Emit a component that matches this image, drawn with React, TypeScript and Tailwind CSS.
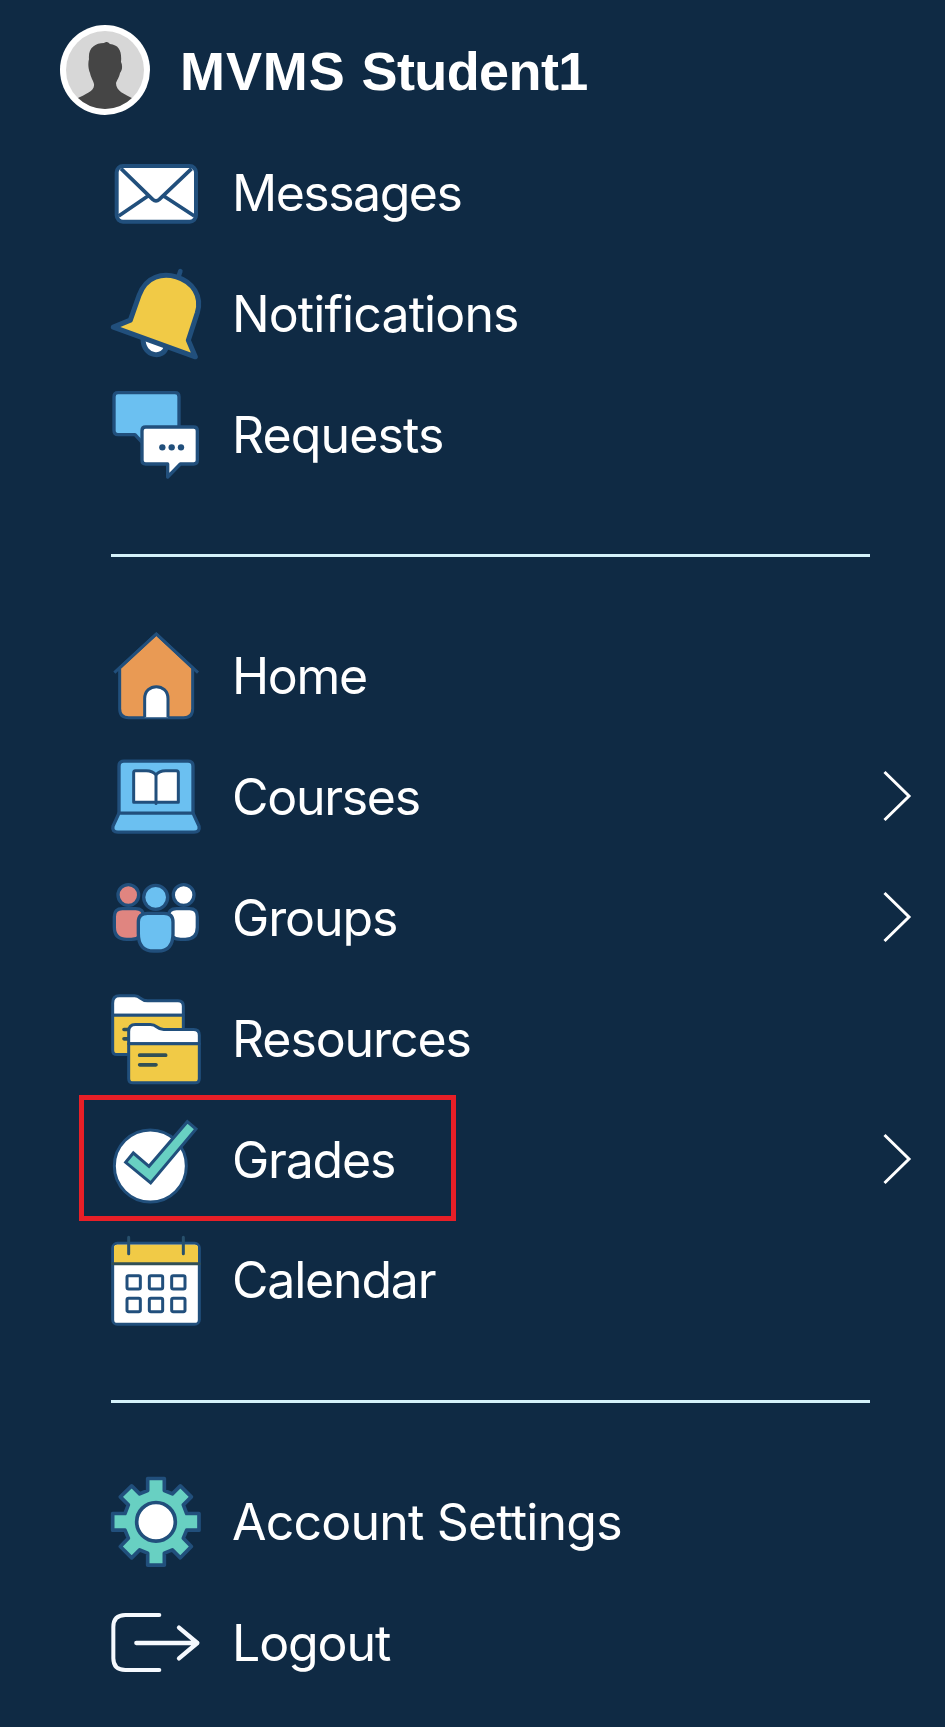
import type { ReactNode } from 'react';

const OUTLINE = '#214f7c';

type IconProps = { viewBox: string; children: ReactNode };

function Icon({ viewBox, children }: IconProps) {
  return (
    <svg viewBox={viewBox} className="h-full w-[120px] shrink-0" fill="none" stroke={OUTLINE} strokeWidth={10} strokeLinejoin="round" strokeLinecap="round" aria-hidden="true">
      {children}
    </svg>
  );
}

const MessagesIcon = () => (
  <Icon viewBox="0 -51 360 362.5">
    <rect x="50" y="48" width="238" height="167" rx="19" fill="#fff" strokeWidth="12" />
    <path d="M63 56 L158 148 Q168 157 178 148 L275 56 M56 198 L145 137 M283 198 L190 137" strokeWidth="11" strokeLinecap="butt" />
  </Icon>
);

const NotificationsIcon = () => (
  <Icon viewBox="0 -18.5 360 362.5">
    <path d="M236 48 L241 33" strokeWidth="14" />
    <path d="M129 236 C129 292 193 297 199 259" fill="#fff" strokeWidth="15" strokeLinecap="butt" />
    <path d="M40 201 L91 180 L117 106 C139 46 189 39 229 50 C279 65 307 108 292 158 L265 240 L286 290 Z" fill="#f1ca46" strokeWidth="15" />
  </Icon>
);

const RequestsIcon = () => (
  <Icon viewBox="0 -16 360 362.5">
    <path d="M54 37 H225 Q237 37 237 49 V150 Q237 163 225 163 H136 V197 L105 163 H54 Q42 163 42 150 V49 Q42 37 54 37Z" fill="#6bc0f1" />
    <path d="M137 140 H281 Q292 140 292 151 V240 Q292 251 281 251 H241 L203 290 V251 H137 Q126 251 126 240 V151 Q126 140 137 140Z" fill="#fff" />
    <g fill="#214f7c" stroke="none"><circle cx="187" cy="201" r="9.5" /><circle cx="215" cy="201" r="9.5" /><circle cx="243" cy="201" r="9.5" /></g>
  </Icon>
);

const HomeIcon = () => (
  <Icon viewBox="0 -11 360 362.5">
    <path d="M59 145 L169 43 L278 145 V267 Q278 294 251 294 H86 Q59 294 59 267Z" fill="#e99a54" strokeWidth="9" />
    <path d="M43 159 L169 43 L294 159" strokeWidth="9" strokeLinecap="butt" strokeLinejoin="miter" />
    <path d="M134 293 V237 C134 189 204 189 204 237 V293" fill="#fff" strokeWidth="9" strokeLinecap="butt" />
  </Icon>
);

const CoursesIcon = () => (
  <Icon viewBox="0 -23.5 360 362.5">
    <path d="M57 205 V64 Q57 49 72 49 H264 Q279 49 279 64 V205" fill="#6bc0f1" />
    <path d="M57 205 H279 L297 244 Q301 262 282 262 H54 Q35 262 39 244Z" fill="#6bc0f1" />
    <path d="M168 91 Q158 78 139 78 H106 Q101 78 101 84 V172 H235 V84 Q235 78 229 78 H197 Q177 78 168 91Z M168 91 V176" fill="#fff" strokeWidth="9" />
  </Icon>
);

const GroupsIcon = () => (
  <Icon viewBox="0 -36 360 362.5">
    <circle cx="85" cy="75" r="31" fill="#e08580" />
    <circle cx="251" cy="75" r="31" fill="#fff" />
    <path d="M43 140 Q43 116 67 116 H107 Q131 116 131 140 V172 Q128 208 94 208 H80 Q43 208 43 172Z" fill="#e08580" />
    <path d="M205 140 Q205 116 229 116 H269 Q292 116 292 140 V172 Q292 208 256 208 H242 Q208 208 205 172Z" fill="#fff" />
    <circle cx="167" cy="82" r="36" fill="#6bc0f1" />
    <path d="M115 156 Q115 130 143 130 H192 Q219 130 219 156 V191 Q219 243 174 243 H161 Q115 243 115 191Z" fill="#6bc0f1" />
  </Icon>
);

const ResourcesIcon = () => (
  <Icon viewBox="0 -18.5 360 362.5">
    <g>
      <path d="M38 90 V54 Q38 32 58 32 H104 C123 32 119 47 143 47 H234 Q250 47 250 63 V90Z" fill="#fff" strokeWidth="9" />
      <path d="M38 90 H250 V195 Q250 208 237 208 H51 Q38 208 38 195Z" fill="#f1ca46" strokeWidth="9" />
      <path d="M72 133 H112 M72 161 H102" stroke="#314f56" strokeWidth="11" />
    </g>
    <g>
      <path d="M86 176 V139 Q86 118 106 118 H151 C173 118 169 133 191 133 H281 Q298 133 298 150 V176Z" fill="#fff" strokeWidth="9" />
      <path d="M86 176 H298 V280 Q298 293 285 293 H99 Q86 293 86 280Z" fill="#f1ca46" strokeWidth="9" />
      <path d="M119 210 H197 M119 239 H168" stroke="#314f56" strokeWidth="11" />
    </g>
  </Icon>
);

const GradesIcon = () => (
  <Icon viewBox="90 44 360 362.5">
    <circle cx="241" cy="242" r="108" fill="#fff" strokeWidth="9" />
    <path d="M190 203 L237 243 L352 109 L378 131 L242 293 L167 231Z" fill="#68d0c2" strokeWidth="9" strokeLinejoin="miter" />
  </Icon>
);

const CalendarIcon = () => (
  <Icon viewBox="0 -15 360 362.5">
    <rect x="38" y="55" width="260" height="243" rx="14" fill="#fff" strokeWidth="9" />
    <path d="M42 116 V68 Q42 59 51 59 H285 Q294 59 294 68 V116Z" fill="#f1ca46" stroke="none" />
    <path d="M38 116 H298" stroke="#314f56" strokeWidth="9" />
    <path d="M86 37 V86 M250 37 V86" stroke="#28506c" strokeWidth="9" />
    <g strokeWidth="9">
      <rect x="81" y="152" width="40" height="40" rx="5" /><rect x="148" y="152" width="40" height="40" rx="5" /><rect x="215" y="152" width="40" height="40" rx="5" />
      <rect x="81" y="220" width="40" height="40" rx="5" /><rect x="148" y="220" width="40" height="40" rx="5" /><rect x="215" y="220" width="40" height="40" rx="5" />
    </g>
  </Icon>
);

const SettingsIcon = () => (
  <Icon viewBox="0 -8.5 360 362.5">
    <path d="M143 41 H193 V77 L217 87 L241 63 L274 96 L250 120 L260 146 H297 V196 H260 L250 220 L274 245 L241 279 L217 255 L193 265 V301 H143 V265 L119 255 L95 279 L61 245 L85 220 L75 196 H38 V146 H75 L85 120 L61 96 L95 63 L119 87 L143 77Z" fill="#68d0c2" strokeWidth="11" />
    <circle cx="168" cy="171" r="58" fill="#fff" strokeWidth="11" />
  </Icon>
);

const LogoutIcon = () => (
  <Icon viewBox="0 -21 360 362.5">
    <g stroke="#f5f9fe">
      <path d="M178 75 H76 Q40 75 40 111 V205 Q40 240 76 240 H178" strokeWidth="12" />
      <path d="M109 159 H292 M237 113 L292 159 L237 205" strokeWidth="13" />
    </g>
  </Icon>
);

function Chevron() {
  return (
    <svg viewBox="0 0 30 52" className="mr-[32px] mb-[3px] ml-auto h-[52px] w-[30px] shrink-0" fill="none" stroke="#fff" strokeWidth="3" aria-hidden="true">
      <path d="M1.5 2 L26 26 L1.5 50" />
    </svg>
  );
}

type Entry = { label: string; tracking: string; icon: ReactNode; expandable?: boolean; highlighted?: boolean };

function Row({ label, tracking, icon, expandable, highlighted }: Entry) {
  return (
    <li className="relative flex h-[120.83px] items-center">
      {icon}
      <span className={`mb-px ml-[12px] text-[50px] leading-[60px] font-normal whitespace-nowrap ${tracking}`}>{label}</span>
      {expandable && <Chevron />}
      {highlighted && <span className="absolute -top-[5px] -left-[21px] h-[126px] w-[377px] border-[5px] border-[#e81f27]" />}
    </li>
  );
}

function Divider() {
  return (
    <div className="flex h-[120.83px] items-center">
      <hr className="ml-[11px] h-[3px] w-[759px] border-0 bg-[#d5f2fa]" />
    </div>
  );
}

const inbox: Entry[] = [
  { label: 'Messages', tracking: 'tracking-[-1.5px]', icon: <MessagesIcon /> },
  { label: 'Notifications', tracking: 'tracking-[-0.9px]', icon: <NotificationsIcon /> },
  { label: 'Requests', tracking: 'tracking-[-0.9px]', icon: <RequestsIcon /> },
];

const places: Entry[] = [
  { label: 'Home', tracking: 'tracking-[-1.3px]', icon: <HomeIcon /> },
  { label: 'Courses', tracking: 'tracking-[-1.3px]', icon: <CoursesIcon />, expandable: true },
  { label: 'Groups', tracking: 'tracking-[-1.1px]', icon: <GroupsIcon />, expandable: true },
  { label: 'Resources', tracking: 'tracking-[-1.1px]', icon: <ResourcesIcon /> },
  { label: 'Grades', tracking: 'tracking-[-1.2px]', icon: <GradesIcon />, expandable: true, highlighted: true },
  { label: 'Calendar', tracking: 'tracking-[-1.2px]', icon: <CalendarIcon /> },
];

const account: Entry[] = [
  { label: 'Account Settings', tracking: 'tracking-[-0.8px]', icon: <SettingsIcon /> },
  { label: 'Logout', tracking: 'tracking-[-1.1px]', icon: <LogoutIcon /> },
];

const Section = ({ entries }: { entries: Entry[] }) => (
  <ul>{entries.map((entry) => <Row key={entry.label} {...entry} />)}</ul>
);

export default function App() {
  return (
    <div className="h-[1727px] w-[945px] overflow-hidden bg-[#0f2a44] font-['Inter',sans-serif] text-white">
      <header className="flex h-[133px] items-start pt-[25px] pl-[60px]">
        <svg viewBox="0 0 90 90" className="size-[90px] shrink-0" aria-hidden="true">
          <defs>
            <clipPath id="face"><circle cx="45" cy="45" r="39" /></clipPath>
            <filter id="soft"><feGaussianBlur stdDeviation="0.7" /></filter>
          </defs>
          <circle cx="45" cy="45" r="45" fill="#fff" />
          <circle cx="45" cy="45" r="39" fill="#d7d7d7" />
          <g clipPath="url(#face)">
            <path filter="url(#soft)" fill="#454545" d="M29 34 C28 23 35 18 44 18 C47 16 48 17 50 19 C59 20 62 26 61 37 C63 41 62 46 60 48 C59 53 57 55 56 58 C56 66 64 69 74 74 L80 90 H10 L16 74 C26 69 35 66 34 59 C33 55 31 53 30 48 C28 43 28 38 29 34Z" />
          </g>
        </svg>
        <h1 className="ml-[30px] pt-[15px] font-['Liberation_Sans',sans-serif] text-[54px] leading-[62px] font-bold whitespace-nowrap">
          <span className="tracking-[0.9px]">MVMS </span>
          <span className="tracking-[-0.6px]">Student1</span>
        </h1>
      </header>
      <nav className="pl-[100px]">
        <Section entries={inbox} />
        <Divider />
        <Section entries={places} />
        <Divider />
        <Section entries={account} />
      </nav>
    </div>
  );
}
